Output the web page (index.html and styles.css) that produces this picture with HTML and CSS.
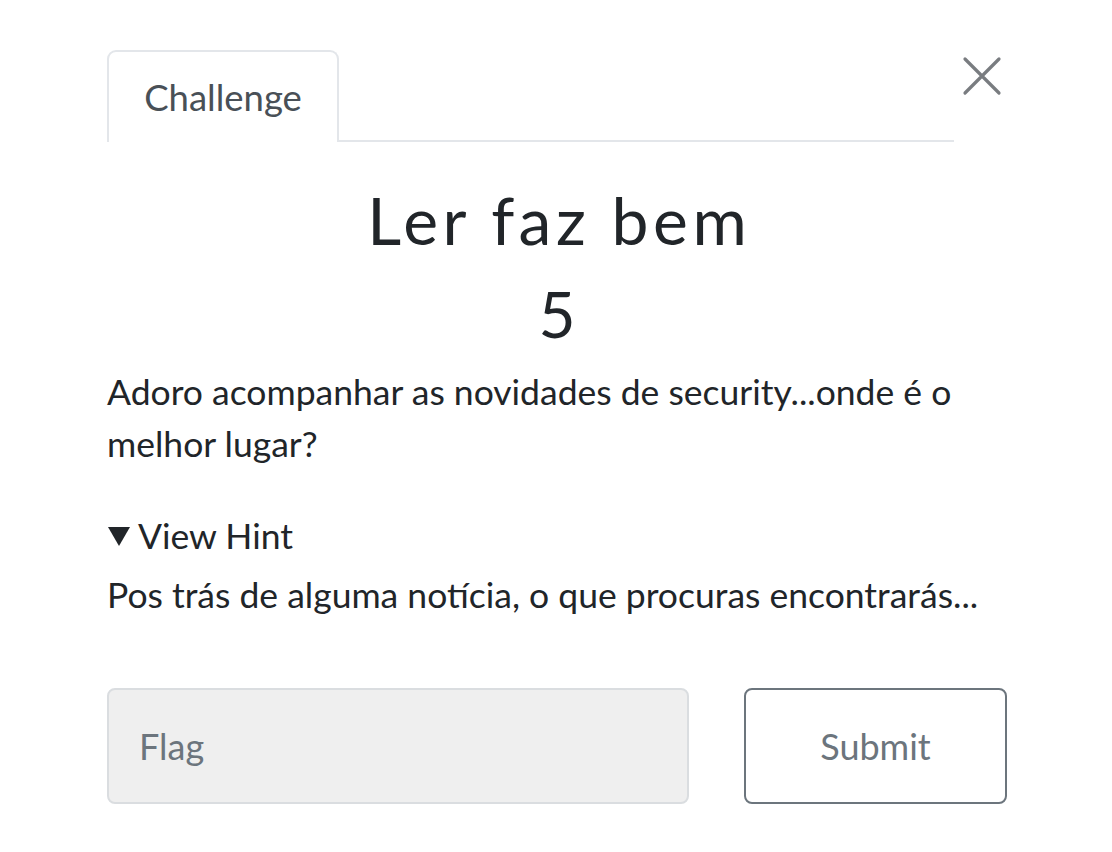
FILE: index.html
```html
<!DOCTYPE html>
<html lang="pt">
<head>
<meta charset="utf-8">
<title>Ler faz bem</title>
<link rel="stylesheet" href="styles.css">
</head>
<body>
<div class="modal">
  <div class="modal-head">
    <ul class="tabs">
      <li class="tab active">Challenge</li>
    </ul>
    <button class="close" aria-label="Close">
      <svg width="40" height="40" viewBox="0 0 40 40"><path d="M3 3 L37 37 M37 3 L3 37" stroke="#797c80" stroke-width="3.2" stroke-linecap="round" fill="none"/></svg>
    </button>
  </div>
  <div class="body">
    <h2 class="name">Ler faz bem</h2>
    <h3 class="value">5</h3>
    <p class="desc">Adoro acompanhar as novidades de security...onde é o melhor lugar?</p>
    <div class="hint">
      <div class="hint-summary"><span class="tri" aria-hidden="true"></span>View Hint</div>
      <div class="hint-text">Pos trás de alguma notícia, o que procuras encontrarás...</div>
    </div>
    <form class="submit-row">
      <input class="flag" type="text" placeholder="Flag">
      <button type="button" class="submit">Submit</button>
    </form>
  </div>
</div>
</body>
</html>
```

FILE: styles.css
```css
html, body {
  margin: 0;
  padding: 0;
  background: #fff;
}
body {
  font-family: Lato, "Open Sans", "Liberation Sans", sans-serif;
  color: #212529;
}
.modal {
  width: 900px;
  padding: 50px 0 0 107px;
}
.modal-head {
  display: flex;
  align-items: flex-start;
}
.tabs {
  list-style: none;
  margin: 0;
  padding: 0;
  width: 847px;
  display: flex;
  border-bottom: 2px solid #e3e6ea;
}
.tab {
  width: 232px;
  height: 92px;
  box-sizing: border-box;
  border: 2px solid #e3e6ea;
  border-bottom: none;
  border-radius: 9px 9px 0 0;
  margin-bottom: -2px;
  background: #fff;
  font-size: 36.5px;
  color: #495057;
  display: flex;
  align-items: center;
  justify-content: center;
}
.close {
  margin: 6px 0 0 8px;
  border: none;
  background: none;
  padding: 0;
  width: 40px;
  height: 40px;
  cursor: pointer;
}
.close svg { display: block; }
.name {
  margin: 38px 0 0;
  font-size: 66px;
  font-weight: 400;
  line-height: 80px;
  letter-spacing: 4.5px;
  text-indent: 4.5px;
  text-align: center;
}
.value {
  margin: 15px 0 0;
  font-size: 64px;
  font-weight: 400;
  line-height: 77px;
  text-align: center;
}
.desc {
  margin: 14px 0 0;
  font-size: 35.5px;
  line-height: 52px;
}
.hint {
  margin-top: 40px;
  font-size: 35.5px;
}
.hint-summary {
  line-height: 52px;
  display: flex;
  align-items: center;
}
.tri {
  width: 0;
  height: 0;
  border-left: 11px solid transparent;
  border-right: 11px solid transparent;
  border-top: 19px solid #212529;
  margin: 1px 8px 0 1px;
}
.hint-text {
  line-height: 52px;
  margin-top: 7px;
}
.submit-row {
  display: flex;
  gap: 55px;
  margin-top: 67px;
}
.flag {
  width: 582px;
  height: 116px;
  box-sizing: border-box;
  background: #efefef;
  border: 2px solid #dadde0;
  border-radius: 8px;
  font-family: inherit;
  font-size: 36px;
  padding: 0 30px;
  color: #495057;
}
.flag::placeholder { color: #6c757d; }
.submit {
  width: 263px;
  height: 116px;
  box-sizing: border-box;
  background: #fff;
  border: 2px solid #6c757d;
  border-radius: 8px;
  font-family: inherit;
  font-size: 36px;
  color: #6c757d;
}
```
